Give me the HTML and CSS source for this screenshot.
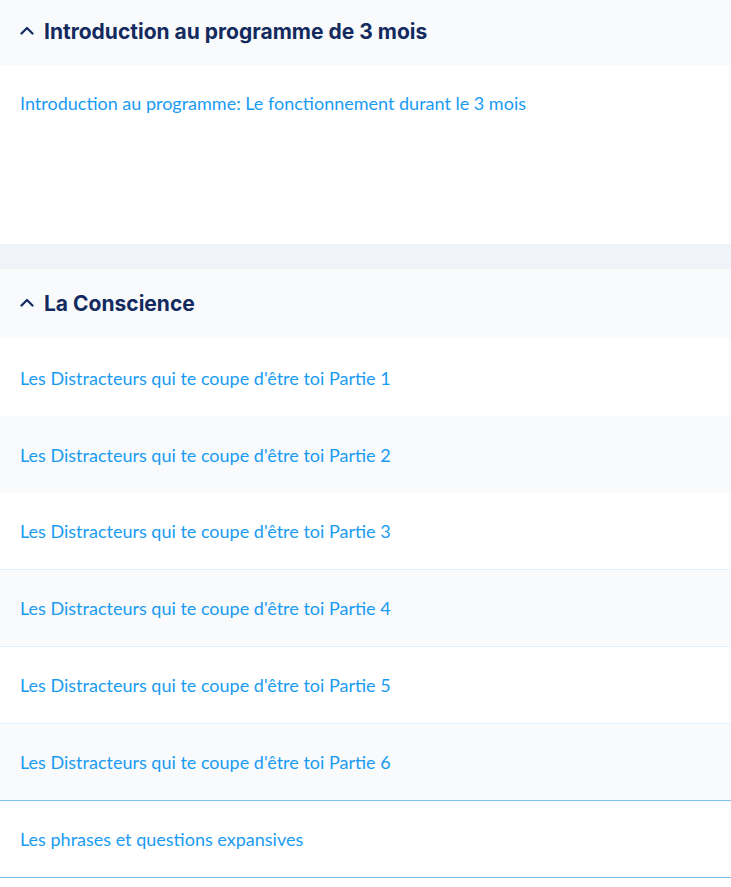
FILE: index.html
```
<!DOCTYPE html>
<html lang="fr">
<head>
    <meta charset="UTF-8">
    <meta name="viewport" content="width=device-width, initial-scale=1.0">
    <title>Programme</title>
    <link rel="stylesheet" href="styles.css">
</head>
<body>
    <section class="module">
        <div class="module-header first">
            <svg class="chevron" width="14" height="9" viewBox="0 0 14 9"><path d="M1.5 7.5 L7 2 L12.5 7.5" fill="none" stroke="#132a5e" stroke-width="2.2" stroke-linecap="round" stroke-linejoin="round"/></svg>
            <h2>Introduction au programme de 3 mois</h2>
        </div>
        <div class="module-intro">
            <a href="#">Introduction au programme: Le fonctionnement durant le 3 mois</a>
        </div>
    </section>

    <div class="spacer"></div>

    <section class="module">
        <div class="module-header">
            <svg class="chevron" width="14" height="9" viewBox="0 0 14 9"><path d="M1.5 7.5 L7 2 L12.5 7.5" fill="none" stroke="#132a5e" stroke-width="2.2" stroke-linecap="round" stroke-linejoin="round"/></svg>
            <h2>La Conscience</h2>
        </div>
        <ul class="lessons">
            <li class="lesson"><a href="#">Les Distracteurs qui te coupe d'être toi Partie 1</a></li>
            <li class="lesson alt"><a href="#">Les Distracteurs qui te coupe d'être toi Partie 2</a></li>
            <li class="lesson line"><a href="#">Les Distracteurs qui te coupe d'être toi Partie 3</a></li>
            <li class="lesson alt line"><a href="#">Les Distracteurs qui te coupe d'être toi Partie 4</a></li>
            <li class="lesson line"><a href="#">Les Distracteurs qui te coupe d'être toi Partie 5</a></li>
            <li class="lesson alt strong"><a href="#">Les Distracteurs qui te coupe d'être toi Partie 6</a></li>
            <li class="lesson strong"><a href="#">Les phrases et questions expansives</a></li>
        </ul>
    </section>
</body>
</html>
```

FILE: styles.css
```
body {
    margin: 0;
    font-family: Lato, "Noto Sans", sans-serif;
    background: #ffffff;
}

.module-header {
    display: flex;
    align-items: center;
    gap: 10px;
    height: 69px;
    padding: 0 20px;
    background-color: #f8fafc;
}

.module-header.first {
    height: 63px;
    padding-bottom: 2px;
}

.module-header h2 {
    margin: 0;
    font-family: Inter, sans-serif;
    font-size: 21px;
    font-weight: 700;
    color: #132a5e;
}

.chevron {
    display: block;
    margin-top: -2px;
}

.module-intro {
    height: 179px;
    box-sizing: border-box;
    padding: 27px 20px 0;
}

a {
    color: #1a9bf2;
    text-decoration: none;
    font-size: 18px;
}

.spacer {
    height: 25px;
    background-color: #f0f4f8;
}

.lessons {
    margin: 0;
    padding: 1px 0 0; /* aligne les lignes sur la maquette */
    list-style: none;
}

.lesson {
    display: flex;
    align-items: center;
    height: 77px;
    box-sizing: border-box;
    padding: 0 20px;
}

.lesson.alt {
    background-color: #f8fafc;
}

.lesson.line {
    border-bottom: 1px solid #e3f1fc;
}

.lesson.strong {
    border-bottom: 1px solid #7dbfec;
}
```
